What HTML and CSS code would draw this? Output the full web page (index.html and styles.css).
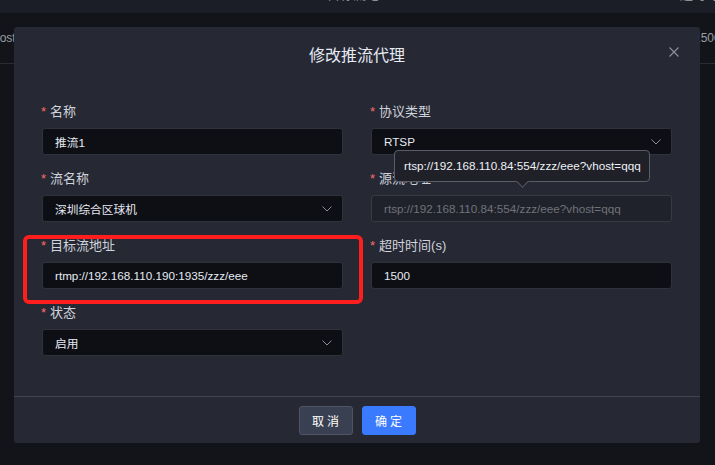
FILE: index.html
```html
<!DOCTYPE html>
<html lang="zh-CN">
<head>
<meta charset="utf-8">
<title>修改推流代理</title>
<link rel="stylesheet" href="styles.css">
</head>
<body>
<div class="page">
  <div class="table">
    <div class="thead">
      <span class="th th-mid">目标流地址</span>
      <span class="th th-right">超时时间</span>
    </div>
    <div class="trow">
      <span class="td td-left">host</span>
      <span class="td td-right">1500</span>
    </div>
  </div>
</div>

<div class="dialog">
  <div class="dialog-header">
    <div class="dialog-title">修改推流代理</div>
    <button class="close" aria-label="关闭">
      <svg width="10" height="10" viewBox="0 0 10 10"><path d="M0.5 0.5L9.5 9.5M9.5 0.5L0.5 9.5" stroke="#8b8e96" stroke-width="1.2" fill="none"/></svg>
    </button>
  </div>

  <div class="dialog-body">
    <div class="form-item">
      <label class="label"><span class="req">*</span>名称</label>
      <div class="input"><span class="val">推流1</span></div>
    </div>
    <div class="form-item">
      <label class="label"><span class="req">*</span>协议类型</label>
      <div class="input select"><span class="val">RTSP</span>
        <svg class="chev" width="10" height="6" viewBox="0 0 10 6"><path d="M0.5 0.5L5 5L9.5 0.5" stroke="#8a8d95" stroke-width="1" fill="none"/></svg>
      </div>
    </div>
    <div class="form-item">
      <label class="label"><span class="req">*</span>流名称</label>
      <div class="input select"><span class="val">深圳综合区球机</span>
        <svg class="chev" width="10" height="6" viewBox="0 0 10 6"><path d="M0.5 0.5L5 5L9.5 0.5" stroke="#8a8d95" stroke-width="1" fill="none"/></svg>
      </div>
    </div>
    <div class="form-item">
      <label class="label"><span class="req">*</span>源流地址</label>
      <div class="input disabled"><span class="val">rtsp://192.168.110.84:554/zzz/eee?vhost=qqq</span></div>
    </div>
    <div class="form-item">
      <label class="label"><span class="req">*</span>目标流地址</label>
      <div class="input"><span class="val">rtmp://192.168.110.190:1935/zzz/eee</span></div>
    </div>
    <div class="form-item">
      <label class="label"><span class="req">*</span>超时时间(s)</label>
      <div class="input"><span class="val">1500</span></div>
    </div>
    <div class="form-item">
      <label class="label"><span class="req">*</span>状态</label>
      <div class="input select"><span class="val">启用</span>
        <svg class="chev" width="10" height="6" viewBox="0 0 10 6"><path d="M0.5 0.5L5 5L9.5 0.5" stroke="#8a8d95" stroke-width="1" fill="none"/></svg>
      </div>
    </div>
  </div>

  <div class="dialog-footer">
    <button class="btn btn-cancel">取消</button>
    <button class="btn btn-primary">确定</button>
  </div>

  <div class="tooltip">rtsp://192.168.110.84:554/zzz/eee?vhost=qqq<span class="tip-arrow"></span></div>
  <div class="highlight"></div>
</div>
</body>
</html>
```

FILE: styles.css
```css
* { box-sizing: border-box; }

html, body {
  margin: 0;
  padding: 0;
  width: 715px;
  height: 465px;
  overflow: hidden;
  background: #131419;
  font-family: "Liberation Sans", "Noto Sans CJK SC", sans-serif;
}

.page { width: 715px; height: 465px; overflow: hidden; }

.table { margin-top: -20px; }

.thead {
  height: 33px;
  background: #1b1d27;
  display: grid;
  grid-template-columns: 327px 353px 1fr;
  line-height: 30px;
  font-size: 13px;
  color: #8e9198;
  overflow: hidden;
}
.th-mid { grid-column: 2; }
.th-right { grid-column: 3; white-space: nowrap; }

.trow {
  height: 51px;
  border-bottom: 1px solid #2a2c35;
  display: grid;
  grid-template-columns: 694px 1fr;
  align-items: center;
  font-size: 12px;
  color: #9a9da5;
  white-space: nowrap;
  overflow: hidden;
}
.td-left { margin-left: -7px; }

.dialog {
  position: absolute;
  left: 14px;
  top: 27px;
  width: 686px;
  height: 416px;
  background: #262833;
  border-radius: 3px;
  display: flex;
  flex-direction: column;
}

.dialog-header {
  padding: 19px 20px 0;
  position: relative;
}
.dialog-title {
  text-align: center;
  font-size: 16px;
  line-height: 20px;
  color: #e5eaf3;
}
.close {
  position: absolute;
  right: 21px;
  top: 20px;
  width: 10px;
  height: 10px;
  padding: 0;
  border: 0;
  background: none;
  display: flex;
}

.dialog-body {
  padding: 36px 28px 0;
  display: grid;
  grid-template-columns: 1fr 1fr;
  column-gap: 28px;
  row-gap: 14px;
}

.form-item { display: flex; flex-direction: column; }

.label {
  font-size: 13px;
  line-height: 20px;
  color: #cfd3dc;
  margin-bottom: 6px;
  white-space: nowrap;
}
.req { color: #f56c6c; margin-right: 4px; margin-left: -1px; }

.input {
  height: 27px;
  background: #0e0f14;
  border: 1px solid #30323b;
  border-radius: 3px;
  padding: 0 12px;
  display: flex;
  align-items: center;
  font-size: 11.7px;
  color: #e5eaf3;
}
.input .val { flex: 1; white-space: nowrap; overflow: hidden; }
.select { padding-right: 10px; }
.chev { flex: none; }

.disabled {
  background: #20222b;
  border-color: #383a43;
  color: #6f7279;
}

.dialog-footer {
  margin-top: auto;
  border-top: 1px solid #42444e;
  padding: 9px 0 8px;
  display: flex;
  justify-content: center;
  gap: 9px;
}

.btn {
  width: 54px;
  height: 29px;
  border-radius: 3px;
  font-family: "Liberation Sans", "Noto Sans CJK SC", sans-serif;
  font-size: 12px;
  letter-spacing: 3px;
  text-indent: 3px;
  color: #ffffff;
  padding: 0;
  cursor: pointer;
}
.btn-cancel { background: #394051; border: 1px solid #4f5565; }
.btn-primary { background: #3a7afe; border: 1px solid #3a7afe; }

.tooltip {
  position: absolute;
  left: 380px;
  top: 123px;
  width: 256px;
  height: 32px;
  padding: 0 9px;
  background: #1f2028;
  border: 1px solid #5b5d66;
  border-radius: 4px;
  font-size: 11.7px;
  line-height: 30px;
  color: #eef0f4;
  white-space: nowrap;
}
.tip-arrow {
  position: absolute;
  left: 123px;
  bottom: -5px;
  width: 9px;
  height: 9px;
  background: #1f2028;
  border-right: 1px solid #5b5d66;
  border-bottom: 1px solid #5b5d66;
  transform: rotate(45deg);
}

.highlight {
  position: absolute;
  left: 9px;
  top: 208px;
  width: 340px;
  height: 69px;
  border: 4px solid #ff1e1e;
  border-radius: 6px;
  pointer-events: none;
}
```
